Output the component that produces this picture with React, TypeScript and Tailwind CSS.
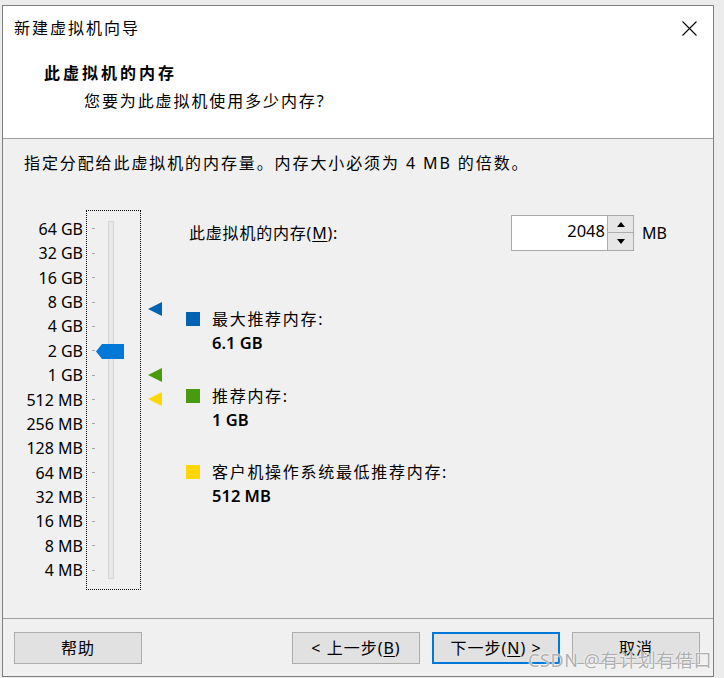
import React from "react";

const labels = [
  "64 GB", "32 GB", "16 GB", "8 GB", "4 GB", "2 GB", "1 GB",
  "512 MB", "256 MB", "128 MB", "64 MB", "32 MB", "16 MB", "8 MB", "4 MB",
];

function Tri({ color, top }: { color: string; top: number }) {
  return (
    <svg className="absolute left-[7px]" style={{ top }} width="14" height="14" viewBox="0 0 14 14">
      <polygon points="0,7 14,0 14,14" fill={color} />
    </svg>
  );
}

function Legend({ color, label, value, mt }: { color: string; label: string; value: string; mt: string }) {
  return (
    <div className={mt}>
      <div className="flex h-[24px] items-center">
        <div className={`h-[14px] w-[14px] shrink-0 ${color}`} />
        <span className="ml-[12px] tracking-[1.7px]">{label}</span>
      </div>
      <div className="flex h-[24px] items-center pl-[26px] text-[16.5px] font-semibold">{value}</div>
    </div>
  );
}

export default function App() {
  return (
    <div
      className="relative h-[678px] w-[724px] overflow-hidden bg-[#ececec] pl-[2px] pt-[5px] text-[16px] text-black"
      style={{ fontFamily: '"Noto Sans", "Noto Sans CJK SC", sans-serif' }}
    >
      <div className="flex h-[672px] w-[712px] flex-col border border-[#7f7f7f] bg-[#f0f0f0]">
        {/* header */}
        <div className="h-[133px] shrink-0 border-b border-[#a0a0a0] bg-white">
          <div className="flex h-[44px] items-center justify-between pl-[11px] pr-[16px]">
            <span className="tracking-[2px]">新建虚拟机向导</span>
            <svg width="15" height="15" viewBox="0 0 15 15">
              <path d="M0.5 0.5 L14.5 14.5 M14.5 0.5 L0.5 14.5" stroke="#000" strokeWidth="1.1" />
            </svg>
          </div>
          <div className="mt-[10.5px] flex h-[24px] items-center pl-[41px] font-bold tracking-[3px]">此虚拟机的内存</div>
          <div className="mt-[4px] flex h-[24px] items-center pl-[81px] tracking-[1.9px]">您要为此虚拟机使用多少内存?</div>
        </div>

        {/* body */}
        <div className="h-[479px] shrink-0 pt-[12px]">
          <div className="flex h-[24px] items-center pl-[21px] tracking-[1.9px]">
            指定分配给此虚拟机的内存量。内存大小必须为 4 MB 的倍数。
          </div>
          <div className="mt-[35px] flex">
            {/* labels */}
            <div className="w-[80px] shrink-0 pt-[6.8px] text-[16px]">
              {labels.map((l) => (
                <div key={l} className="flex h-[24.38px] items-center justify-end">{l}</div>
              ))}
            </div>
            {/* slider */}
            <div className="relative ml-[3px] flex h-[380px] w-[55px] shrink-0 border border-dotted border-black">
              <div className="ml-[5px] pt-[5.8px]">
                {labels.map((l) => (
                  <div key={l} className="flex h-[24.38px] items-center">
                    <div className="h-[1px] w-[3px] bg-[#a8a8a8]" />
                  </div>
                ))}
              </div>
              <div className="ml-[13px] mt-[10px] h-[358px] w-[6px] border border-[#d6d6d6] bg-[#e7e7e7]" />
              <svg className="absolute left-[9px] top-[133px]" width="28" height="15" viewBox="0 0 28 15">
                <polygon points="0,7.5 6,0 28,0 28,15 6,15" fill="#0078d7" />
              </svg>
            </div>
            {/* markers */}
            <div className="relative w-[45px] shrink-0">
              <Tri color="#0063b1" top={92} />
              <Tri color="#4a9a0f" top={158} />
              <Tri color="#ffd700" top={182} />
            </div>
            {/* right pane */}
            <div className="flex-1">
              <div className="mt-[5px] flex items-center">
                <span className="w-[325px] shrink-0 pl-[3px] tracking-[0.8px]">
                  此虚拟机的内存(<span className="underline underline-offset-2">M</span>):
                </span>
                <div className="flex h-[36px] w-[123px] shrink-0 border border-[#a9a9a9] bg-white">
                  <div className="flex flex-1 items-center justify-end pb-[4px] pr-[2px] text-[16.5px]">2048</div>
                  <div className="flex w-[26px] flex-col border-l border-[#adadad] bg-[#e6e6e6]">
                    <div className="flex h-[17px] items-center justify-center border-b border-[#adadad]">
                      <svg width="8" height="5" viewBox="0 0 8 5"><polygon points="4,0 8,5 0,5" fill="#000" /></svg>
                    </div>
                    <div className="flex flex-1 items-center justify-center">
                      <svg width="8" height="5" viewBox="0 0 8 5"><polygon points="0,0 8,0 4,5" fill="#000" /></svg>
                    </div>
                  </div>
                </div>
                <span className="ml-[8px]">MB</span>
              </div>
              <Legend color="bg-[#0063b1]" label="最大推荐内存:" value="6.1 GB" mt="mt-[56px]" />
              <Legend color="bg-[#4a9a0f]" label="推荐内存:" value="1 GB" mt="mt-[29px]" />
              <Legend color="bg-[#ffd700]" label="客户机操作系统最低推荐内存:" value="512 MB" mt="mt-[28px]" />
            </div>
          </div>
        </div>

        {/* footer */}
        <div className="flex h-[58px] shrink-0 border-t border-[#a0a0a0] pl-[11px] pr-[13px] pt-[13px]">
          <button className="flex h-[32px] w-[128px] items-center justify-center border border-[#adadad] bg-[#e1e1e1] tracking-[1px]">帮助</button>
          <div className="flex-1" />
          <button className="flex h-[32px] w-[128px] items-center justify-center border border-[#adadad] bg-[#e1e1e1] tracking-[1px]">
            &lt; 上一步(<span className="underline underline-offset-2">B</span>)
          </button>
          <button className="ml-[12px] flex h-[32px] w-[128px] items-center justify-center border-2 border-[#0078d7] bg-[#e1e1e1] tracking-[1px]">
            下一步(<span className="underline underline-offset-2">N</span>) &gt;
          </button>
          <button className="ml-[12px] flex h-[32px] w-[128px] items-center justify-center border border-[#adadad] bg-[#e1e1e1] tracking-[1px]">取消</button>
        </div>
      </div>
      <div
        className="absolute left-[528px] top-[647px] text-[18px] tracking-[0.6px] text-[#b0b0b0]"
        style={{ textShadow: "0 0 1px #fff, 0 0 2px #fff" }}
      >
        CSDN @有计划有借口
      </div>
    </div>
  );
}
